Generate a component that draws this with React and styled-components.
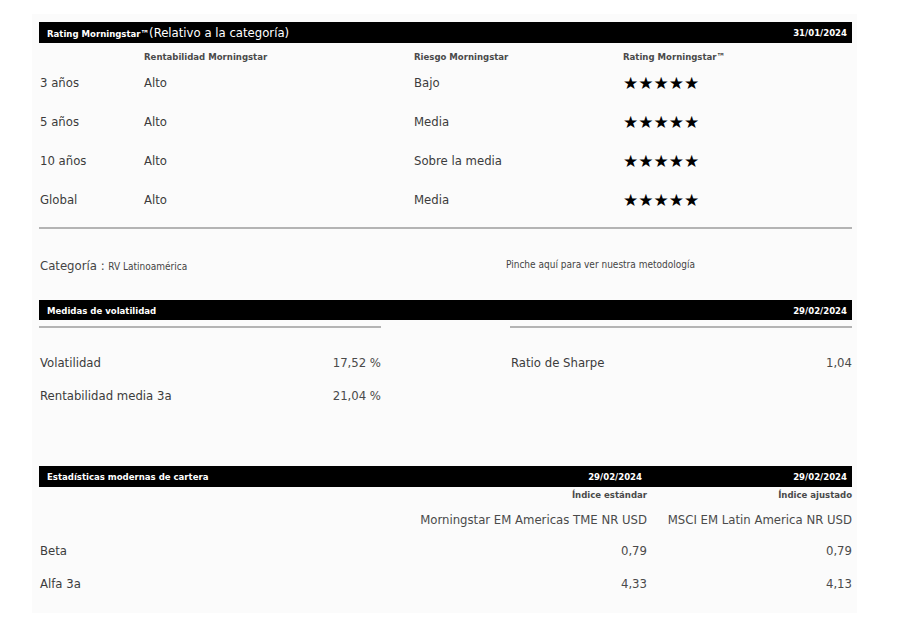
import React from 'react'
import styled, { createGlobalStyle } from 'styled-components'

const GlobalStyle = createGlobalStyle`
  html, body {
    margin: 0;
    padding: 0;
    background: #fff;
  }
  body {
    font-family: "DejaVu Sans Condensed", "Liberation Sans", sans-serif;
    color: #3c3c3c;
  }
`

const StyledPage = styled.div`
  padding: 14px 0 0 32px;
`

const StyledPanel = styled.div`
  width: 825px;
  box-sizing: border-box;
  padding: 8px 5px 13px 7px;
  background: #fbfbfb;
`

const StyledBar = styled.div`
  display: grid;
  grid-template-columns: ${({ $cols }) => $cols || '1fr auto'};
  align-items: center;
  height: ${({ $h }) => $h || 21}px;
  background: #000;
  color: #fff;
  font-size: 9.5px;
  font-weight: bold;
  padding-left: 8px;
`

const StyledBarCell = styled.div`
  text-align: ${({ $right }) => ($right ? 'right' : 'left')};
  padding-right: ${({ $right }) => ($right ? 5 : 0)}px;
  white-space: nowrap;
`

const StyledBarSub = styled.span`
  font-size: 13px;
  font-weight: normal;
`

const StyledRatingGrid = styled.div`
  display: grid;
  grid-template-columns: 104px 270px 209px 1fr;
  padding-left: 1px;
`

const StyledHeadCell = styled.div`
  font-size: 9.5px;
  font-weight: bold;
  color: #4a4a4a;
  line-height: 12px;
  padding-top: 8px;
`

const StyledCell = styled.div`
  display: flex;
  align-items: center;
  height: 39px;
  font-size: 13px;
`

const StyledStars = styled.span`
  font-family: "DejaVu Sans", sans-serif;
  font-size: 17px;
  color: #000;
`

const StyledDivider = styled.div`
  height: 2px;
  background: #b4b4b4;
  margin-top: ${({ $top }) => $top || 0}px;
`

const StyledCategoryRow = styled.div`
  display: grid;
  grid-template-columns: 466px 1fr;
  align-items: center;
  height: 24px;
  margin: 23px 0 24px;
  padding-left: 1px;
`

const StyledCategoryLabel = styled.span`
  font-size: 13px;
  color: #444;
`

const StyledSmall = styled.span`
  font-size: 10px;
  color: #444;
`

const StyledVolGrid = styled.div`
  display: grid;
  grid-template-columns: 342px 342px;
  column-gap: 129px;
`

const StyledVolCol = styled.div`
  display: flex;
  flex-direction: column;
`

const StyledVolRows = styled.div`
  margin-top: 18px;
`

const StyledValueRow = styled.div`
  display: grid;
  grid-template-columns: ${({ $cols }) => $cols || '1fr auto'};
  align-items: center;
  height: ${({ $h }) => $h || 33}px;
  padding-top: ${({ $pt }) => $pt || 0}px;
  box-sizing: border-box;
  font-size: ${({ $fs }) => $fs || 13}px;
  font-weight: ${({ $bold }) => ($bold ? 'bold' : 'normal')};
  padding-left: 1px;
`

const StyledValue = styled.span`
  text-align: right;
  white-space: nowrap;
  color: #4a4a4a;
`

const StyledStats = styled.div`
  margin-top: 54px;
`

const ratings = [
  ['3 años', 'Alto', 'Bajo'],
  ['5 años', 'Alto', 'Media'],
  ['10 años', 'Alto', 'Sobre la media'],
  ['Global', 'Alto', 'Media']
]

const statCols = '1fr 240px 205px'

const App = () => (
  <StyledPage>
    <GlobalStyle />
    <StyledPanel>
      <StyledBar>
        <StyledBarCell>
          Rating Morningstar™<StyledBarSub>(Relativo a la categoría)</StyledBarSub>
        </StyledBarCell>
        <StyledBarCell $right>31/01/2024</StyledBarCell>
      </StyledBar>
      <StyledRatingGrid>
        <StyledHeadCell />
        <StyledHeadCell>Rentabilidad Morningstar</StyledHeadCell>
        <StyledHeadCell>Riesgo Morningstar</StyledHeadCell>
        <StyledHeadCell>Rating Morningstar™</StyledHeadCell>
        {ratings.map(([period, ret, risk]) => (
          <React.Fragment key={period}>
            <StyledCell>{period}</StyledCell>
            <StyledCell>{ret}</StyledCell>
            <StyledCell>{risk}</StyledCell>
            <StyledCell>
              <StyledStars>★★★★★</StyledStars>
            </StyledCell>
          </React.Fragment>
        ))}
      </StyledRatingGrid>
      <StyledDivider $top={8} />
      <StyledCategoryRow>
        <div>
          <StyledCategoryLabel>Categoría : </StyledCategoryLabel>
          <StyledSmall>RV Latinoamérica</StyledSmall>
        </div>
        <StyledSmall>Pinche aquí para ver nuestra metodología</StyledSmall>
      </StyledCategoryRow>

      <StyledBar $h={20}>
        <StyledBarCell>Medidas de volatilidad</StyledBarCell>
        <StyledBarCell $right>29/02/2024</StyledBarCell>
      </StyledBar>
      <StyledVolGrid>
        <StyledVolCol>
          <StyledDivider $top={6} />
          <StyledVolRows>
            <StyledValueRow>
              <span>Volatilidad</span>
              <StyledValue>17,52 %</StyledValue>
            </StyledValueRow>
            <StyledValueRow>
              <span>Rentabilidad media 3a</span>
              <StyledValue>21,04 %</StyledValue>
            </StyledValueRow>
          </StyledVolRows>
        </StyledVolCol>
        <StyledVolCol>
          <StyledDivider $top={6} />
          <StyledVolRows>
            <StyledValueRow>
              <span>Ratio de Sharpe</span>
              <StyledValue>1,04</StyledValue>
            </StyledValueRow>
          </StyledVolRows>
        </StyledVolCol>
      </StyledVolGrid>

      <StyledStats>
        <StyledBar $cols={statCols}>
          <StyledBarCell>Estadísticas modernas de cartera</StyledBarCell>
          <StyledBarCell $right>29/02/2024</StyledBarCell>
          <StyledBarCell $right>29/02/2024</StyledBarCell>
        </StyledBar>
        <StyledValueRow $cols={statCols} $h={14} $fs={9.5} $bold>
          <span />
          <StyledValue>Índice estándar</StyledValue>
          <StyledValue>Índice ajustado</StyledValue>
        </StyledValueRow>
        <StyledValueRow $cols={statCols} $h={33} $pt={4}>
          <span />
          <StyledValue>Morningstar EM Americas TME NR USD</StyledValue>
          <StyledValue>MSCI EM Latin America NR USD</StyledValue>
        </StyledValueRow>
        <StyledValueRow $cols={statCols}>
          <span>Beta</span>
          <StyledValue>0,79</StyledValue>
          <StyledValue>0,79</StyledValue>
        </StyledValueRow>
        <StyledValueRow $cols={statCols}>
          <span>Alfa 3a</span>
          <StyledValue>4,33</StyledValue>
          <StyledValue>4,13</StyledValue>
        </StyledValueRow>
      </StyledStats>
    </StyledPanel>
  </StyledPage>
)

export default App
